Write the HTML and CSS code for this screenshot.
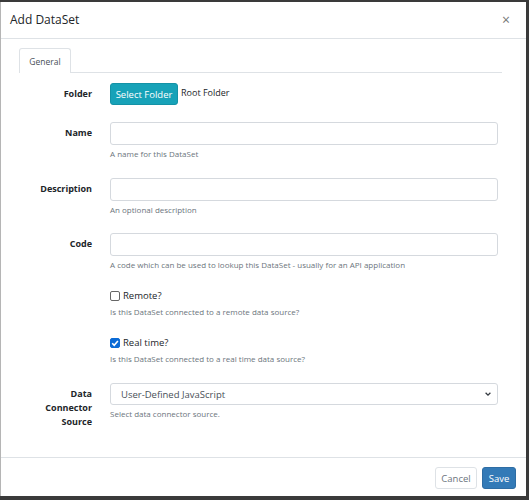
FILE: index.html
```html
<!DOCTYPE html>
<html>
<head>
<meta charset="utf-8">
<link rel="stylesheet" href="styles.css">
</head>
<body>
<div class="modal">
  <div class="modal-header">
    <div class="modal-title">Add DataSet</div>
    <div class="close">×</div>
  </div>
  <div class="modal-body">
    <div class="tabs">
      <div class="tab active">General</div>
      <div class="tab-rest"></div>
    </div>
    <div class="form">
      <div class="row row-folder">
        <div class="label">Folder</div>
        <div class="field folder-field">
          <div class="btn btn-info">Select Folder</div>
          <span class="folder-name">Root Folder</span>
        </div>
      </div>
      <div class="row">
        <div class="label">Name</div>
        <div class="field">
          <div class="input"></div>
          <div class="help">A name for this DataSet</div>
        </div>
      </div>
      <div class="row">
        <div class="label">Description</div>
        <div class="field">
          <div class="input"></div>
          <div class="help">An optional description</div>
        </div>
      </div>
      <div class="row row-code">
        <div class="label">Code</div>
        <div class="field">
          <div class="input"></div>
          <div class="help">A code which can be used to lookup this DataSet - usually for an API application</div>
        </div>
      </div>
      <div class="row row-check">
        <div class="label"></div>
        <div class="field">
          <label class="check"><span class="box"></span>Remote?</label>
          <div class="help">Is this DataSet connected to a remote data source?</div>
        </div>
      </div>
      <div class="row row-check">
        <div class="label"></div>
        <div class="field">
          <label class="check"><span class="box checked"><svg viewBox="0 0 10 10" width="10" height="10"><path d="M2.2 5.2 L4.2 7.2 L7.9 2.9" fill="none" stroke="#fff" stroke-width="1.6"/></svg></span>Real time?</label>
          <div class="help">Is this DataSet connected to a real time data source?</div>
        </div>
      </div>
      <div class="row row-select">
        <div class="label label-multi">Data<br>Connector<br>Source</div>
        <div class="field">
          <div class="input select">
            <span>User-Defined JavaScript</span>
            <svg viewBox="0 0 10 10" width="8" height="8"><path d="M2 3.5 L5 6.5 L8 3.5" fill="none" stroke="#343a40" stroke-width="1.6"/></svg>
          </div>
          <div class="help">Select data connector source.</div>
        </div>
      </div>
    </div>
  </div>
  <div class="modal-footer">
    <div class="btn btn-default">Cancel</div>
    <div class="btn btn-primary">Save</div>
  </div>
</div>
</body>
</html>
```
FILE: styles.css
```css
html, body {
  margin: 0;
  padding: 0;
  height: 100%;
}
body {
  background: #3a3a3a;
  font-family: "Open Sans", "Noto Sans", sans-serif;
  color: #212529;
  box-sizing: border-box;
  padding: 2px 3px 4px 0;
}
.modal {
  background: #fff;
  height: 100%;
  border-left: 1px solid #b5b5b5;
  display: flex;
  flex-direction: column;
  box-sizing: border-box;
}
.modal-header {
  height: 36px;
  border-bottom: 1px solid #dee2e6;
  display: flex;
  align-items: center;
  justify-content: space-between;
  padding: 0 16px 0 9px;
}
.modal-title {
  font-size: 12px;
  line-height: 20px;
  color: #212529;
}
.close {
  font-size: 14px;
  color: #777;
  line-height: 14px;
}
.modal-body {
  flex: 1;
  padding: 9px 24px 0 18px;
}
.tabs {
  display: flex;
  height: 25px;
}
.tab {
  width: 50px;
  border: 1px solid #dee2e6;
  border-bottom: none;
  border-radius: 3px 3px 0 0;
  font-size: 8.5px;
  color: #495057;
  text-align: center;
  line-height: 25px;
}
.tab-rest {
  flex: 1;
  border-bottom: 1px solid #dee2e6;
}
.form {
  padding-top: 10px;
  display: flex;
  flex-direction: column;
}
.row {
  display: grid;
  grid-template-columns: 73px 1fr;
  column-gap: 18px;
  margin-bottom: 18.5px;
  padding-right: 4px;
}
.row-folder {
  margin-bottom: 17px;
}
.row-code {
  margin-bottom: 19px;
}
.label {
  font-size: 9px;
  font-weight: 700;
  text-align: right;
  line-height: 22px;
  color: #212529;
}
.label-multi {
  line-height: 14px;
  padding-top: 4px;
}
.field {
  display: flex;
  flex-direction: column;
}
.folder-field {
  flex-direction: row;
  align-items: flex-start;
  gap: 3px;
}
.folder-name {
  font-size: 9px;
  line-height: 20px;
  color: #212529;
}
.btn {
  font-size: 9.5px;
  border-radius: 3px;
  box-sizing: border-box;
  display: flex;
  align-items: center;
  justify-content: center;
}
.btn-info {
  background: #17a2b8;
  border: 1px solid #1492a6;
  color: #fff;
  height: 22px;
  width: 68px;
}
.input {
  height: 23px;
  border: 1px solid #d5d9de;
  border-radius: 3px;
  box-sizing: border-box;
}
.help {
  font-size: 8px;
  color: #6c757d;
  line-height: 11px;
  margin-top: 3px;
}
.row-check {
  margin-bottom: 19px;
}
.check {
  display: flex;
  align-items: center;
  font-size: 9.5px;
  line-height: 14px;
  color: #212529;
  gap: 3px;
}
.box {
  width: 10px;
  height: 10px;
  box-sizing: border-box;
  border: 1px solid #666;
  border-radius: 2px;
  display: flex;
}
.box.checked {
  background: #0b6bd6;
  border-color: #0b6bd6;
}
.box svg {
  margin: -1px;
}
.row-select {
  margin-top: 0;
}
.select {
  display: flex;
  align-items: center;
  justify-content: space-between;
  padding: 0 5px 0 10px;
  font-size: 9.5px;
  color: #495057;
  height: 22px;
}
.modal-footer {
  height: 39px;
  border-top: 1px solid #dee2e6;
  display: flex;
  align-items: center;
  justify-content: flex-end;
  gap: 5px;
  padding: 2px 10px 0 0;
  box-sizing: border-box;
}
.btn-default {
  border: 1px solid #dee2e6;
  color: #6c757d;
  height: 22px;
  width: 42px;
  background: #fff;
}
.btn-primary {
  background: #337ab7;
  border: 1px solid #2e6da4;
  color: #fff;
  height: 22px;
  width: 34px;
}
```
